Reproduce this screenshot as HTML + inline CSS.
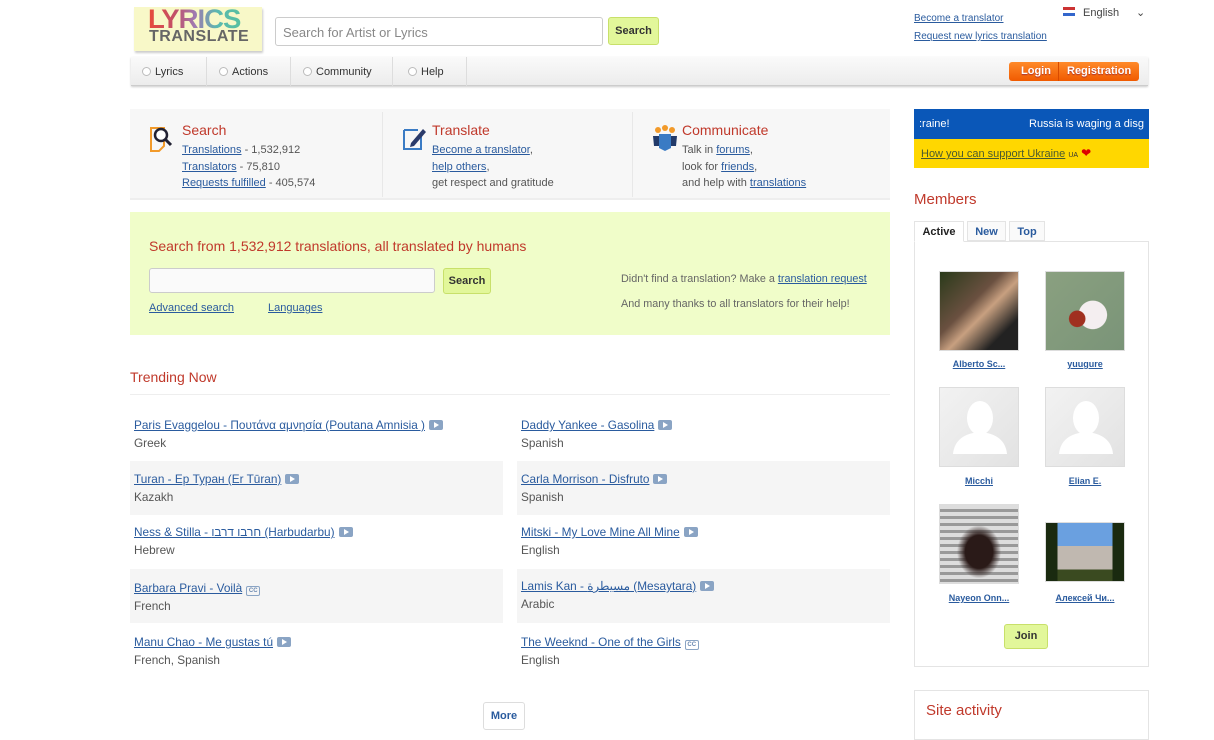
<!DOCTYPE html>
<html><head><meta charset="utf-8"><style>
*{margin:0;padding:0;box-sizing:border-box}
body{width:1214px;height:728px;overflow:hidden;background:#fff;font-family:"Liberation Sans",Arial,"Noto Sans CJK SC",sans-serif;color:#555;position:relative;font-size:12px}
.a{position:absolute}
a{color:#2a5b9e;text-decoration:underline}
.h{color:#c0392b;font-size:15px}
.btn{background:#e2f79a;border:1px solid #c8e06a;border-radius:3px;font-weight:bold;color:#333;font-size:11px;text-align:center}
.row{position:absolute;height:54px;padding:9px 4px 0 4px;font-size:11.8px;line-height:18px}
.row.g{background:#f5f5f5}
.row a{color:#2a5b9e}
.ic{display:inline-block;width:14px;height:10px;background:#8aa4c4;border-radius:2px;vertical-align:-1px;margin-left:4px;position:relative}
.ic:after{content:"";position:absolute;left:5px;top:2px;border-left:5px solid #fff;border-top:3px solid transparent;border-bottom:3px solid transparent}
.cc{display:inline-block;width:14px;height:10px;border:1px solid #8aa4c4;border-radius:2px;font-size:6px;color:#6a88b0;vertical-align:0;margin-left:4px;text-align:center;line-height:8px;font-weight:bold}
.av{position:absolute;width:80px;height:80px;background:#eee;border:1px solid #ddd}
.nm{position:absolute;width:100px;text-align:center;font-size:9px;font-weight:bold}
.nav{font-size:11px;color:#333;top:66px}
.nav b{display:inline-block;width:9px;height:9px;border:1px solid #bbb;border-radius:50%;vertical-align:-1px;margin-right:4px;background:#fff}
</style></head><body>
<!-- logo -->
<div class="a" style="left:134px;top:7px;width:128px;height:44px;background:#f8f8c8;box-shadow:1px 2px 2px #ccc"></div>
<div class="a" style="left:148px;top:6px;font:900 27px/26px 'Liberation Sans';transform:scaleX(1.02);transform-origin:left;letter-spacing:-1px;background:linear-gradient(90deg,#e84a3a,#c0506a 30%,#a07ab0 50%,#5ab9b0 75%,#58c0a0);-webkit-background-clip:text;color:transparent">LYRICS</div>
<div class="a" style="left:149px;top:28px;font:bold 16px/18px 'Liberation Sans';color:#666;letter-spacing:0.5px">TRANSLATE</div>
<div class="a" style="left:275px;top:17px;width:328px;height:29px;border:1px solid #ccc;border-radius:3px;padding:7px;font-size:13px;color:#888">Search for Artist or Lyrics</div>
<div class="a btn" style="left:608px;top:17px;width:51px;height:28px;line-height:26px">Search</div>
<div class="a" style="left:914px;top:10px;font-size:10px;line-height:18px"><a>Become a translator</a><br><a>Request new lyrics translation</a></div>
<div class="a" style="left:1063px;top:7px;font-size:11px;color:#444"><span style="display:inline-block;width:12px;height:9px;background:linear-gradient(#c33 33%,#fff 33%,#fff 66%,#36c 66%);margin-right:8px"></span>English</div>
<div class="a" style="left:1136px;top:6px;font-size:11px;color:#444">&#8964;</div>
<!-- nav -->
<div class="a" style="left:131px;top:57px;width:1017px;height:29px;background:linear-gradient(#fafafa,#ececec);border-bottom:1px solid #ccc;box-shadow:0 1px 2px #ccc"></div>
<div class="a" style="left:206px;top:57px;width:1px;height:29px;background:#ddd"></div>
<div class="a" style="left:290px;top:57px;width:1px;height:29px;background:#ddd"></div>
<div class="a" style="left:392px;top:57px;width:1px;height:29px;background:#ddd"></div>
<div class="a" style="left:466px;top:57px;width:1px;height:29px;background:#ddd"></div>
<div class="a nav" style="left:142px"><b></b>Lyrics</div>
<div class="a nav" style="left:219px"><b></b>Actions</div>
<div class="a nav" style="left:303px"><b></b>Community</div>
<div class="a nav" style="left:408px"><b></b>Help</div>
<div class="a" style="left:1009px;top:62px;width:130px;height:19px;background:linear-gradient(#ff8a2a,#f05a00);border-radius:3px;color:#fff;font-size:11px;font-weight:bold;line-height:19px;text-shadow:0 1px 1px #a33"><span style="position:absolute;left:12px">Login</span><span style="position:absolute;left:49px;top:0;width:1px;height:19px;background:#d84a00"></span><span style="position:absolute;left:58px">Registration</span></div>
<!-- features -->
<div class="a" style="left:130px;top:109px;width:760px;height:91px;background:#f7f7f7;border-bottom:2px solid #eee"></div>
<div class="a" style="left:382px;top:112px;width:1px;height:85px;background:#e8e8e8"></div>
<div class="a" style="left:632px;top:112px;width:1px;height:85px;background:#e8e8e8"></div>
<svg class="a" style="left:148px;top:124px" width="28" height="28"><path d="M3 4h13v18l-5 5H3z" fill="none" stroke="#f29a2a" stroke-width="2"/><circle cx="13" cy="11" r="6" fill="#fff" stroke="#223" stroke-width="2.5"/><path d="M17 15l6 6" stroke="#223" stroke-width="3"/></svg>
<svg class="a" style="left:401px;top:124px" width="28" height="28"><path d="M3 6h14M3 6v19h17V12" fill="none" stroke="#3a7bc4" stroke-width="2"/><path d="M10 19l12-14 3 3-12 14-4 1z" fill="#2a3a6a"/></svg>
<svg class="a" style="left:651px;top:124px" width="28" height="28"><circle cx="7" cy="6" r="3" fill="#f29a2a"/><circle cx="14" cy="4" r="3" fill="#f29a2a"/><circle cx="21" cy="6" r="3" fill="#f29a2a"/><path d="M2 12h6v10H3zM20 12h6l-1 10h-5z" fill="#223a6a"/><path d="M8 10h12v14l-6 3-6-3z" fill="#3a7bc4"/></svg>
<div class="a h" style="left:182px;top:122px;font-size:14px">Search</div>
<div class="a" style="left:182px;top:142px;font-size:11px;line-height:16.5px"><a>Translations</a> - 1,532,912<br><a>Translators</a> - 75,810<br><a>Requests fulfilled</a> - 405,574</div>
<div class="a h" style="left:432px;top:122px;font-size:14px">Translate</div>
<div class="a" style="left:432px;top:142px;font-size:11px;line-height:16.5px"><a>Become a translator</a>,<br><a>help others</a>,<br>get respect and gratitude</div>
<div class="a h" style="left:682px;top:122px;font-size:14px">Communicate</div>
<div class="a" style="left:682px;top:142px;font-size:11px;line-height:16.5px">Talk in <a>forums</a>,<br>look for <a>friends</a>,<br>and help with <a>translations</a></div>
<!-- green search -->
<div class="a" style="left:130px;top:212px;width:760px;height:123px;background:#f0fdc9"></div>
<div class="a h" style="left:149px;top:238px;font-size:14px">Search from 1,532,912 translations, all translated by humans</div>
<div class="a" style="left:149px;top:268px;width:286px;height:25px;border:1px solid #ccc;border-radius:3px;background:#fafafa"></div>
<div class="a btn" style="left:443px;top:268px;width:48px;height:26px;line-height:24px">Search</div>
<div class="a" style="left:149px;top:302px;font-size:11px"><a>Advanced search</a></div>
<div class="a" style="left:268px;top:302px;font-size:11px"><a>Languages</a></div>
<div class="a" style="left:621px;top:273px;font-size:10.8px;color:#666">Didn't find a translation? Make a <a>translation request</a></div>
<div class="a" style="left:621px;top:298px;font-size:10.8px;color:#666">And many thanks to all translators for their help!</div>
<!-- trending -->
<div class="a h" style="left:130px;top:369px;font-size:14px">Trending Now</div>
<div class="a" style="left:130px;top:394px;width:760px;height:1px;background:#eee"></div>
<div class="row" style="left:130px;top:407px;width:373px"><a>Paris Evaggelou - Πουτάνα αμνησία (Poutana Amnisia )</a><span class="ic"></span><br>Greek</div>
<div class="row g" style="left:130px;top:461px;width:373px"><a>Turan - Ер Туран (Er Tūran)</a><span class="ic"></span><br>Kazakh</div>
<div class="row" style="left:130px;top:515px;width:373px;padding-top:8px"><a>Ness &amp; Stilla - חרבו דרבו (Harbudarbu)</a><span class="ic"></span><br>Hebrew</div>
<div class="row g" style="left:130px;top:569px;width:373px;padding-top:10px"><a>Barbara Pravi - Voilà</a><span class="cc">CC</span><br>French</div>
<div class="row" style="left:130px;top:623px;width:373px;padding-top:10px"><a>Manu Chao - Me gustas tú</a><span class="ic"></span><br>French, Spanish</div>
<div class="row" style="left:517px;top:407px;width:373px"><a>Daddy Yankee - Gasolina</a><span class="ic"></span><br>Spanish</div>
<div class="row g" style="left:517px;top:461px;width:373px"><a>Carla Morrison - Disfruto</a><span class="ic"></span><br>Spanish</div>
<div class="row" style="left:517px;top:515px;width:373px;padding-top:8px"><a>Mitski - My Love Mine All Mine</a><span class="ic"></span><br>English</div>
<div class="row g" style="left:517px;top:569px;width:373px;padding-top:8px"><a>Lamis Kan - مسيطرة (Mesaytara)</a><span class="ic"></span><br>Arabic</div>
<div class="row" style="left:517px;top:623px;width:373px;padding-top:10px"><a>The Weeknd - One of the Girls</a><span class="cc">CC</span><br>English</div>
<div class="a" style="left:483px;top:702px;width:42px;height:28px;border:1px solid #ddd;border-radius:3px;font-size:11px;font-weight:bold;color:#2a5b9e;text-align:center;line-height:26px">More</div>
<!-- sidebar -->
<div class="a" style="left:914px;top:109px;width:235px;height:30px;background:#0a57b8;color:#fff;font-size:11px;line-height:30px;overflow:hidden;white-space:nowrap"><span style="position:absolute;left:5px">:raine!</span><span style="position:absolute;left:115px">Russia is waging a disg</span></div>
<div class="a" style="left:914px;top:139px;width:235px;height:29px;background:#ffd700;font-size:11px;line-height:29px;padding-left:7px"><a style="color:#4a5a30">How you can support Ukraine</a> <span style="font-size:7px;color:#333">UA</span> <span style="color:#d00;font-size:12px">&#10084;</span></div>
<div class="a h" style="left:914px;top:191px;font-size:15px">Members</div>
<div class="a" style="left:914px;top:241px;width:235px;height:426px;border:1px solid #e4e4e4"></div>
<div class="a" style="left:914px;top:221px;width:50px;height:21px;border:1px solid #e4e4e4;border-bottom:1px solid #fff;background:#fff;font-size:11px;font-weight:bold;color:#222;text-align:center;line-height:20px">Active</div>
<div class="a" style="left:967px;top:221px;width:39px;height:20px;border:1px solid #e4e4e4;background:#fafafa;font-size:11px;font-weight:bold;color:#2a5b9e;text-align:center;line-height:20px">New</div>
<div class="a" style="left:1009px;top:221px;width:36px;height:20px;border:1px solid #e4e4e4;background:#fafafa;font-size:11px;font-weight:bold;color:#2a5b9e;text-align:center;line-height:20px">Top</div>
<div class="av" style="left:939px;top:271px;background:linear-gradient(135deg,#2a3a1a,#6a5040 40%,#c8a080 55%,#222 80%)"></div>
<div class="av" style="left:1045px;top:271px;background:radial-gradient(circle at 40% 60%,#a03020 0 12%,transparent 13%),radial-gradient(circle at 60% 55%,#f4eef0 0 22%,transparent 23%),linear-gradient(135deg,#8aa080,#7a9478)"></div>
<div class="av" style="left:939px;top:387px;background:linear-gradient(135deg,#f2f2f2,#e2e2e2)"><svg width="78" height="78"><ellipse cx="40" cy="30" rx="13" ry="17" fill="#fff"/><path d="M13 66q2-20 27-22q25 2 27 22z" fill="#fff"/></svg></div>
<div class="av" style="left:1045px;top:387px;background:linear-gradient(135deg,#f2f2f2,#e2e2e2)"><svg width="78" height="78"><ellipse cx="40" cy="30" rx="13" ry="17" fill="#fff"/><path d="M13 66q2-20 27-22q25 2 27 22z" fill="#fff"/></svg></div>
<div class="av" style="left:939px;top:504px;background:radial-gradient(ellipse at 50% 60%,#2a1a18 0 25%,transparent 40%),repeating-linear-gradient(#ddd 0 4px,#999 4px 7px)"></div>
<div class="av" style="left:1045px;top:522px;height:60px;background:linear-gradient(90deg,#1a2a10 0 15%,transparent 15% 85%,#1a2a10 85%),linear-gradient(#6aa0e0 0 40%,#c0b8b0 40% 80%,#3a4a20 80%)"></div>
<div class="nm" style="left:929px;top:359px"><a>Alberto Sc...</a></div>
<div class="nm" style="left:1035px;top:359px"><a>yuugure</a></div>
<div class="nm" style="left:929px;top:476px"><a>Micchi</a></div>
<div class="nm" style="left:1035px;top:476px"><a>Elian E.</a></div>
<div class="nm" style="left:929px;top:593px"><a>Nayeon Onn...</a></div>
<div class="nm" style="left:1035px;top:593px"><a>Алексей Чи...</a></div>
<div class="a btn" style="left:1004px;top:624px;width:44px;height:25px;line-height:23px">Join</div>
<div class="a" style="left:914px;top:690px;width:235px;height:50px;border:1px solid #e4e4e4"></div>
<div class="a h" style="left:926px;top:702px;font-size:15px">Site activity</div>
</body></html>
